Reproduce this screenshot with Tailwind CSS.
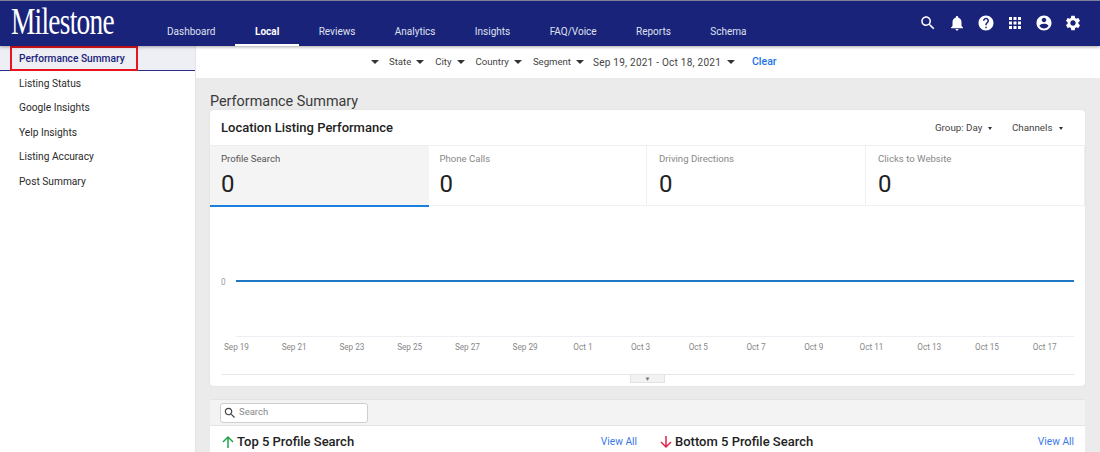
<!DOCTYPE html>
<html><head><meta charset="utf-8"><script src="https://cdn.jsdelivr.net/npm/@tailwindcss/browser@4"></script></head>
<body class="m-0">
<div class="w-[1100px] h-[452px] overflow-hidden flex flex-col bg-[#ebebeb] font-['Roboto',sans-serif] text-[10.2px] text-[#333]">
  <header class="relative z-10 h-[46px] shrink-0 flex bg-[#1a237a] border-t border-[#80809a] text-white shadow-[0_1px_3px_rgba(0,0,0,0.35)]">
    <div class="w-[147px] shrink-0 pl-[11px] pt-[3px]"><span class="block font-['Liberation_Serif',serif] text-[38px] leading-[34px] tracking-[-1px] origin-left scale-x-[0.72] whitespace-nowrap">Milestone</span></div>
    <nav class="flex h-[45px] text-[10px] text-[#dfe1f0]">
      <a class="px-[20px] pt-[23px] h-full">Dashboard</a>
      <a class="px-[19.7px] pt-[23px] h-full font-bold text-white border-b-2 border-white">Local</a>
      <a class="px-[19.7px] pt-[23px] h-full">Reviews</a>
      <a class="px-[19.7px] pt-[23px] h-full">Analytics</a>
      <a class="px-[19.7px] pt-[23px] h-full">Insights</a>
      <a class="px-[19.7px] pt-[23px] h-full">FAQ/Voice</a>
      <a class="px-[19.7px] pt-[23px] h-full">Reports</a>
      <a class="px-[19.7px] pt-[23px] h-full">Schema</a>
    </nav>
    <div class="ml-auto mr-[18px] h-[44px] flex items-center gap-[11px]">
      <svg class="w-[18px] h-[18px] fill-white" viewBox="0 0 24 24"><path d="M15.5 14h-.79l-.28-.27C15.41 12.59 16 11.11 16 9.5 16 5.91 13.09 3 9.5 3S3 5.91 3 9.5 5.91 16 9.5 16c1.61 0 3.09-.59 4.23-1.57l.27.28v.79l5 4.99L20.49 19l-4.99-5zm-6 0C7.01 14 5 11.99 5 9.5S7.01 5 9.5 5 14 7.01 14 9.5 11.99 14 9.5 14z"/></svg>
      <svg class="w-[18px] h-[18px] fill-white" viewBox="0 0 24 24"><path d="M12 22c1.1 0 2-.9 2-2h-4c0 1.1.89 2 2 2zm6-6v-5c0-3.07-1.64-5.64-4.5-6.32V4c0-.83-.67-1.5-1.5-1.5s-1.5.67-1.5 1.5v.68C7.63 5.36 6 7.92 6 11v5l-2 2v1h16v-1l-2-2z"/></svg>
      <svg class="w-[18px] h-[18px] fill-white" viewBox="0 0 24 24"><path d="M12 2C6.48 2 2 6.48 2 12s4.48 10 10 10 10-4.48 10-10S17.52 2 12 2zm1 17h-2v-2h2v2zm2.07-7.75l-.9.92C13.45 12.9 13 13.5 13 15h-2v-.5c0-1.1.45-2.1 1.17-2.83l1.24-1.26c.37-.36.59-.86.59-1.41 0-1.1-.9-2-2-2s-2 .9-2 2H8c0-2.21 1.79-4 4-4s4 1.79 4 4c0 .88-.36 1.68-.93 2.25z"/></svg>
      <svg class="w-[18px] h-[18px] fill-white" viewBox="0 0 24 24"><path d="M4 8h4V4H4v4zm6 12h4v-4h-4v4zm-6 0h4v-4H4v4zm0-6h4v-4H4v4zm6 0h4v-4h-4v4zm6-10v4h4V4h-4zm-6 4h4V4h-4v4zm6 6h4v-4h-4v4zm0 6h4v-4h-4v4z"/></svg>
      <svg class="w-[18px] h-[18px] fill-white" viewBox="0 0 24 24"><path d="M12 2C6.48 2 2 6.48 2 12s4.48 10 10 10 10-4.48 10-10S17.52 2 12 2zm0 3c1.66 0 3 1.34 3 3s-1.34 3-3 3-3-1.34-3-3 1.34-3 3-3zm0 14.2c-2.5 0-4.71-1.28-6-3.22.03-1.99 4-3.08 6-3.08 1.99 0 5.97 1.09 6 3.08-1.29 1.94-3.5 3.22-6 3.22z"/></svg>
      <svg class="w-[18px] h-[18px] fill-white" viewBox="0 0 24 24"><path d="M19.14 12.94c.04-.3.06-.61.06-.94 0-.32-.02-.64-.07-.94l2.03-1.58c.18-.14.23-.41.12-.61l-1.92-3.32c-.12-.22-.37-.29-.59-.22l-2.39.96c-.5-.38-1.03-.7-1.62-.94l-.36-2.54c-.04-.24-.24-.41-.48-.41h-3.84c-.24 0-.43.17-.47.41l-.36 2.54c-.59.24-1.13.57-1.62.94l-2.39-.96c-.22-.08-.47 0-.59.22L2.74 8.87c-.12.21-.08.47.12.61l2.03 1.58c-.05.3-.09.63-.09.94s.02.64.07.94l-2.03 1.58c-.18.14-.23.41-.12.61l1.92 3.32c.12.22.37.29.59.22l2.39-.96c.5.38 1.03.7 1.62.94l.36 2.54c.05.24.24.41.48.41h3.84c.24 0 .44-.17.47-.41l.36-2.54c.59-.24 1.13-.56 1.62-.94l2.39.96c.22.08.47 0 .59-.22l1.92-3.32c.12-.22.07-.47-.12-.61l-2.01-1.58zM12 15.6c-1.98 0-3.6-1.62-3.6-3.6s1.62-3.6 3.6-3.6 3.6 1.62 3.6 3.6-1.62 3.6-3.6 3.6z"/></svg>
    </div>
  </header>
  <div class="flex flex-1 min-h-0">
    <aside class="w-[196px] shrink-0 bg-white border-r border-[#e4e4e4]">
      <div class="relative h-[25px] bg-[#eeeef5] border-b border-[#2a2f86] pl-[19px] pt-[1px] flex items-center text-[#1a237a] font-medium">Performance Summary
        <div class="absolute left-[10px] top-0 w-[128px] h-[25px] border-[2.5px] border-[#e8141f]"></div>
      </div>
      <ul class="text-[#2a2a2a] pt-[0.25px]">
        <li class="h-[24.5px] pl-[19px] flex items-center">Listing Status</li>
        <li class="h-[24.5px] pl-[19px] flex items-center">Google Insights</li>
        <li class="h-[24.5px] pl-[19px] flex items-center">Yelp Insights</li>
        <li class="h-[24.5px] pl-[19px] flex items-center">Listing Accuracy</li>
        <li class="h-[24.5px] pl-[19px] flex items-center">Post Summary</li>
      </ul>
    </aside>
    <main class="flex-1 min-w-0">
      <div class="h-[32px] bg-white flex items-center pl-[175px] text-[9.6px] text-[#444]">
        <i class="w-0 h-0 border-x-[4px] border-t-[4px] border-x-transparent border-t-[#333] mr-[10px]"></i><span>State</span>
        <i class="w-0 h-0 border-x-[4px] border-t-[4px] border-x-transparent border-t-[#333] ml-[5px] mr-[11px]"></i><span>City</span>
        <i class="w-0 h-0 border-x-[4px] border-t-[4px] border-x-transparent border-t-[#333] ml-[5px] mr-[11px]"></i><span>Country</span>
        <i class="w-0 h-0 border-x-[4px] border-t-[4px] border-x-transparent border-t-[#333] ml-[5px] mr-[11px]"></i><span>Segment</span>
        <i class="w-0 h-0 border-x-[4px] border-t-[4px] border-x-transparent border-t-[#333] ml-[5px] mr-[9px]"></i><span class="text-[10px] tracking-[0.25px]">Sep 19, 2021 - Oct 18, 2021</span>
        <i class="w-0 h-0 border-x-[4px] border-t-[4px] border-x-transparent border-t-[#333] ml-[6px] mr-[17px]"></i><span class="font-medium text-[10.5px] text-[#1a73e8]">Clear</span>
      </div>
      <div class="pl-[14px] pr-[15px]">
        <h1 class="h-[32px] pt-[15px] text-[14.4px] leading-[18px] font-normal text-[#3a3a3a]">Performance Summary</h1>
        <section class="h-[276px] bg-white rounded-[4px] shadow-[0_0_2px_rgba(0,0,0,0.08)] flex flex-col">
          <div class="h-[36px] shrink-0 flex items-center pl-[11px] pr-[22.5px] border-b border-[#eeeeee] pt-[1px]">
            <h2 class="text-[13px] font-medium text-[#222]">Location Listing Performance</h2>
            <span class="ml-auto text-[9.8px] text-[#444]">Group: Day</span>
            <i class="w-0 h-0 border-x-[2.5px] border-t-[3px] border-x-transparent border-t-[#333] ml-[6px] mr-[19.5px]"></i>
            <span class="text-[9.8px] text-[#444]">Channels</span>
            <i class="w-0 h-0 border-x-[2.5px] border-t-[3px] border-x-transparent border-t-[#333] ml-[6px]"></i>
          </div>
          <div class="h-[60px] shrink-0 flex border-b border-[#f0f0f0]">
            <div class="w-[218.5px] bg-[#f4f4f4] border-b-2 border-[#1a7fe0] pl-[11px] pt-[6px] h-[61px] text-[9.6px] text-[#555]">Profile Search<div class="text-[24px] leading-[28px] mt-[4px] text-[#222]">0</div></div>
            <div class="w-[218.5px] border-r border-[#f0f0f0] pl-[11px] pt-[6px] text-[9.6px] text-[#888]">Phone Calls<div class="text-[24px] leading-[28px] mt-[4px] text-[#222]">0</div></div>
            <div class="w-[219px] border-r border-[#f0f0f0] pl-[12px] pt-[6px] text-[9.6px] text-[#888]">Driving Directions<div class="text-[24px] leading-[28px] mt-[4px] text-[#222]">0</div></div>
            <div class="w-[219px] border-r border-[#f0f0f0] pl-[12px] pt-[6px] text-[9.6px] text-[#888]">Clicks to Website<div class="text-[24px] leading-[28px] mt-[4px] text-[#222]">0</div></div>
          </div>
          <div class="relative flex-1 text-[8.2px] text-[#888]">
            <div class="h-[131px] ml-[26px] mr-[11px] border-b border-[#eeeef5] relative">
              <span class="absolute left-[-15px] top-[70px] leading-[12px] text-[#999]">0</span>
              <div class="absolute inset-x-0 top-[74px] h-[2px] bg-[#1f78c1]"></div>
            </div>
            <div class="grid grid-cols-15 w-[866px] -ml-[2.4px] mt-[4px] text-center leading-[12px]">
              <span>Sep 19</span><span>Sep 21</span><span>Sep 23</span><span>Sep 25</span><span>Sep 27</span><span>Sep 29</span><span>Oct 1</span><span>Oct 3</span><span>Oct 5</span><span>Oct 7</span><span>Oct 9</span><span>Oct 11</span><span>Oct 13</span><span>Oct 15</span><span>Oct 17</span>
            </div>
            <div class="ml-[12px] mt-[21px] mr-[11px] pr-[1px] border-t border-[#e6e6e6] flex justify-center">
              <div class="w-[35px] h-[8px] bg-[#f2f2f2] border border-t-0 border-[#e2e2e2] text-[6px] leading-[7px] text-center text-[#777]">▼</div>
            </div>
          </div>
        </section>
        <section class="mt-[13px] bg-white rounded-t-[2px]">
          <div class="h-[27px] bg-[#f3f3f3] border-y border-[#e4e4e4] flex items-center pl-[10px]">
            <div class="w-[148px] h-[20px] bg-white border border-[#cfcfcf] rounded-[3px] flex items-center pl-[2px] gap-[2px] text-[9.5px] text-[#888]">
              <svg class="w-[14px] h-[14px] fill-[#444]" viewBox="0 0 24 24"><path d="M15.5 14h-.79l-.28-.27C15.41 12.59 16 11.11 16 9.5 16 5.91 13.09 3 9.5 3S3 5.91 3 9.5 5.91 16 9.5 16c1.61 0 3.09-.59 4.23-1.57l.27.28v.79l5 4.99L20.49 19l-4.99-5zm-6 0C7.01 14 5 11.99 5 9.5S7.01 5 9.5 5 14 7.01 14 9.5 11.99 14 9.5 14z"/></svg>Search
            </div>
          </div>
          <div class="flex pt-[6px] pl-[11px] pr-[11px] items-center">
            <div class="w-[416px] flex items-center">
              <svg class="w-[14px] h-[14px] mr-[2px] fill-none stroke-[#1fa64a] stroke-[1.5]" viewBox="0 0 14 14"><path d="M7 13V2M2 7l5-5 5 5"/></svg>
              <h3 class="text-[13px] font-medium text-[#222]">Top 5 Profile Search</h3>
              <a class="ml-auto text-[#3b78e7] text-[10.2px]">View All</a>
            </div>
            <div class="flex-1 flex items-center pl-[22px]">
              <svg class="w-[14px] h-[14px] mr-[2px] fill-none stroke-[#e0244a] stroke-[1.5]" viewBox="0 0 14 14"><path d="M7 1v11M2 7l5 5 5-5"/></svg>
              <h3 class="text-[13px] font-medium text-[#222]">Bottom 5 Profile Search</h3>
              <a class="ml-auto text-[#3b78e7] text-[10.2px]">View All</a>
            </div>
          </div>
        </section>
      </div>
    </main>
  </div>
</div>
</body></html>
